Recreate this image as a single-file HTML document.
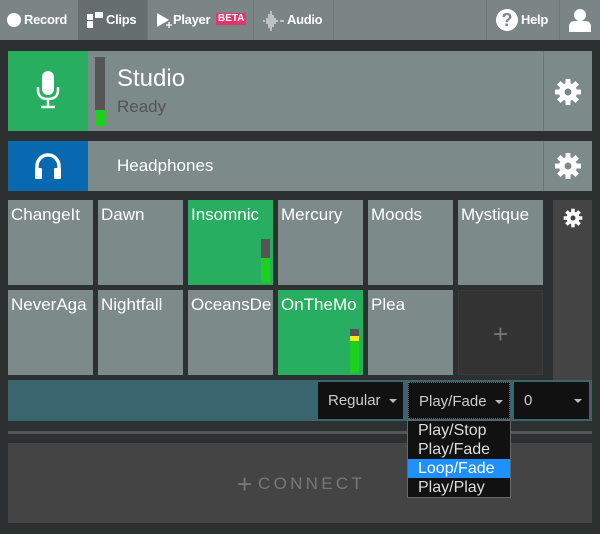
<!DOCTYPE html>
<html><head><style>
*{box-sizing:border-box;margin:0;padding:0}
body{width:600px;height:534px;background:#2d3031;font-family:"Liberation Sans",sans-serif;position:relative;overflow:hidden;color:#fff}
.a{position:absolute}
.nav{left:0;top:0;width:600px;height:40px;background:#7b8585}
.nt{top:0;height:40px;font-weight:bold;font-size:13px;line-height:40px;color:#fff;letter-spacing:-0.3px}
.tile{background:#7d8a8a;position:absolute;width:85px;height:85px;font-size:17px;padding:5px 0 0 3px;white-space:nowrap;overflow:hidden}
.g{background:#27ae60}
.sel{background:#111;height:37px;top:382px;font-size:15px;color:#ccc;line-height:37px;padding-left:10px}
.car{position:absolute;width:0;height:0;border-left:4px solid transparent;border-right:4px solid transparent;border-top:4px solid #bbb;top:17px}
.dd div{height:19px;line-height:19px;font-size:16px;padding-left:10px;color:#ddd}
.sep{top:0;width:1px;height:40px;background:#6d7777}
</style></head><body>
<div class="a nav"></div>
<div class="a" style="left:78px;top:0;width:69px;height:40px;background:#666e6e"></div>
<div class="a sep" style="left:147px"></div>
<div class="a sep" style="left:253px"></div>
<div class="a sep" style="left:333px"></div>
<div class="a sep" style="left:486px"></div>
<div class="a sep" style="left:559px"></div>
<div class="a" style="left:7px;top:13px;width:14px;height:14px;border-radius:50%;background:#fff"></div>
<div class="a nt" style="left:24px">Record</div>
<div class="a" style="left:87px;top:14px;width:6px;height:6px;background:#fff"></div>
<div class="a" style="left:95px;top:12px;width:8px;height:6px;background:#fff"></div>
<div class="a" style="left:87px;top:21px;width:6px;height:7px;background:#fff"></div>
<div class="a nt" style="left:106px">Clips</div>
<svg class="a" style="left:156px;top:12px" width="16" height="18"><path d="M1 1L13 8L1 15Z" fill="#fff"/><path d="M10 13h6M13 10v6" stroke="#fff" stroke-width="1.3"/></svg>
<div class="a nt" style="left:173px">Player</div>
<div class="a" style="left:216px;top:13px;height:12px;background:#e2356a;color:#fff;font-size:10px;font-weight:bold;line-height:12px;padding:0 2px">BETA</div>
<svg class="a" style="left:262px;top:10px" width="24" height="22"><g stroke="#fff" stroke-width="1"><path d="M1 11h2M5 8v6M7 4v14M9 1v20M11 5v12M13 8v6M15 10v2M18 11h4"/></g></svg>
<div class="a nt" style="left:287px">Audio</div>
<div class="a" style="left:496px;top:9px;width:22px;height:22px;border-radius:50%;background:#fff;color:#7b8585;font-weight:bold;font-size:18px;line-height:22px;text-align:center">?</div>
<div class="a nt" style="left:521px">Help</div>
<svg class="a" style="left:569px;top:8px" width="22" height="24"><circle cx="11" cy="7" r="6" fill="#fff"/><path d="M0 24v-5q0-6 6-6h10q6 0 6 6v5Z" fill="#fff"/></svg>

<div class="a" style="left:8px;top:51px;width:584px;height:80px;background:#7d8a8a"></div>
<div class="a" style="left:8px;top:51px;width:80px;height:80px;background:#27ae60"></div>
<svg class="a" style="left:36px;top:71px" width="24" height="40"><rect x="6" y="0" width="12" height="24" rx="6" fill="#fff"/><path d="M2 16v3q0 9 10 9q10 0 10-9v-3" stroke="#fff" stroke-width="2.5" fill="none"/><path d="M12 28v7M5 36h14" stroke="#fff" stroke-width="2.5"/></svg>
<div class="a" style="left:95px;top:57px;width:10px;height:69px;background:#555"></div>
<div class="a" style="left:95px;top:110px;width:10px;height:16px;background:#1ed01e"></div>
<div class="a" style="left:117px;top:65px;font-size:24px">Studio</div>
<div class="a" style="left:117px;top:97px;font-size:17px;color:#555">Ready</div>
<div class="a" style="left:543px;top:51px;width:1px;height:80px;background:#6a7575"></div>
<div class="a" style="left:8px;top:141px;width:584px;height:50px;background:#7d8a8a"></div>
<div class="a" style="left:8px;top:141px;width:80px;height:50px;background:#0868b0"></div>
<svg class="a" style="left:33px;top:152px" width="30" height="28"><path d="M4 22v-8a11 11 0 0 1 22 0v8" stroke="#fff" stroke-width="3.5" fill="none"/><rect x="2" y="16" width="7" height="11" rx="1" fill="#fff"/><rect x="21" y="16" width="7" height="11" rx="1" fill="#fff"/></svg>
<div class="a" style="left:117px;top:156px;font-size:17px">Headphones</div>
<div class="a" style="left:543px;top:141px;width:1px;height:50px;background:#6a7575"></div>
<svg class="a" style="left:554px;top:78px" width="28" height="28" viewBox="-14 -14 28 28"><g fill="#fff"><circle r="9"/><rect x="-2.5" y="-13" width="5" height="26"/><rect x="-2.5" y="-13" width="5" height="26" transform="rotate(45)"/><rect x="-2.5" y="-13" width="5" height="26" transform="rotate(90)"/><rect x="-2.5" y="-13" width="5" height="26" transform="rotate(135)"/></g><circle r="3.5" fill="#7d8a8a"/></svg>
<svg class="a" style="left:554px;top:152px" width="28" height="28" viewBox="-14 -14 28 28"><g fill="#fff"><circle r="9"/><rect x="-2.5" y="-13" width="5" height="26"/><rect x="-2.5" y="-13" width="5" height="26" transform="rotate(45)"/><rect x="-2.5" y="-13" width="5" height="26" transform="rotate(90)"/><rect x="-2.5" y="-13" width="5" height="26" transform="rotate(135)"/></g><circle r="3.5" fill="#7d8a8a"/></svg>

<div class="a" style="left:553px;top:200px;width:39px;height:180px;background:#444"></div>
<svg class="a" style="left:563px;top:208px" width="20" height="20" viewBox="-14 -14 28 28"><g fill="#fff"><circle r="9"/><rect x="-2.5" y="-13" width="5" height="26"/><rect x="-2.5" y="-13" width="5" height="26" transform="rotate(45)"/><rect x="-2.5" y="-13" width="5" height="26" transform="rotate(90)"/><rect x="-2.5" y="-13" width="5" height="26" transform="rotate(135)"/></g><circle r="3.5" fill="#444"/></svg>
<div class="tile" style="left:8px;top:200px">ChangeIt</div>
<div class="tile" style="left:98px;top:200px">Dawn</div>
<div class="tile g" style="left:188px;top:200px">Insomnic</div>
<div class="tile" style="left:278px;top:200px">Mercury</div>
<div class="tile" style="left:368px;top:200px">Moods</div>
<div class="tile" style="left:458px;top:200px">Mystique</div>
<div class="tile" style="left:8px;top:290px">NeverAga</div>
<div class="tile" style="left:98px;top:290px">Nightfall</div>
<div class="tile" style="left:188px;top:290px">OceansDe</div>
<div class="tile g" style="left:278px;top:290px">OnTheMo</div>
<div class="tile" style="left:368px;top:290px">Plea</div>
<div class="tile" style="left:458px;top:290px;background:#333;border:1px solid #3a3a3a;color:#777;font-size:26px;text-align:center;padding:28px 0 0">+</div>
<div class="a" style="left:261px;top:239px;width:9px;height:44px;background:#555"></div>
<div class="a" style="left:261px;top:258px;width:9px;height:25px;background:#1ed01e"></div>
<div class="a" style="left:350px;top:329px;width:9px;height:44px;background:#555"></div>
<div class="a" style="left:350px;top:336px;width:9px;height:5px;background:#f0f020"></div>
<div class="a" style="left:350px;top:341px;width:9px;height:32px;background:#1ed01e"></div>

<div class="a" style="left:8px;top:380px;width:584px;height:41px;background:#3a646e"></div>
<div class="a sel" style="left:318px;width:85px">Regular<span class="car" style="left:71px"></span></div>
<div class="a sel" style="left:408px;width:102px;border:1px dotted #666">Play/Fade<span class="car" style="left:86px"></span></div>
<div class="a sel" style="left:514px;width:75px">0<span class="car" style="left:60px"></span></div>
<div class="a" style="left:8px;top:431px;width:584px;height:3px;background:#555"></div>
<div class="a" style="left:8px;top:443px;width:584px;height:80px;background:#444"></div>
<div class="a" style="left:237px;top:471px;font-size:26px;line-height:26px;color:#777">+</div>
<div class="a" style="left:258px;top:475px;font-size:17px;line-height:17px;color:#777;letter-spacing:3.3px">CONNECT</div>
<div class="a dd" style="left:407px;top:420px;width:104px;height:78px;background:#111;border:1px solid #666">
<div>Play/Stop</div><div>Play/Fade</div><div style="background:#1e90ff;color:#fff">Loop/Fade</div><div>Play/Play</div></div>
</body></html>
